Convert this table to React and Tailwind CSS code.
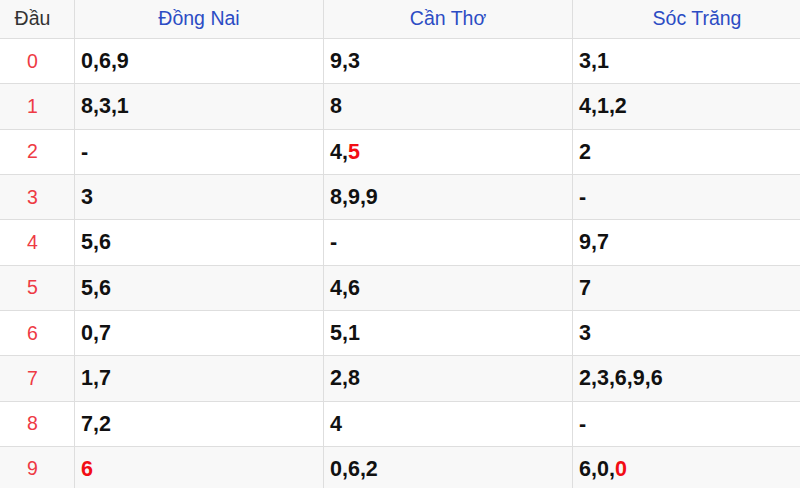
const stations = ["Đồng Nai", "Cần Thơ", "Sóc Trăng"];

// each value: array of [digit, isRed]
const rows = [
  [[["0,6,9"]], [["9,3"]], [["3,1"]]],
  [[["8,3,1"]], [["8"]], [["4,1,2"]]],
  [[["-"]], [["4,"], ["5", true]], [["2"]]],
  [[["3"]], [["8,9,9"]], [["-"]]],
  [[["5,6"]], [["-"]], [["9,7"]]],
  [[["5,6"]], [["4,6"]], [["7"]]],
  [[["0,7"]], [["5,1"]], [["3"]]],
  [[["1,7"]], [["2,8"]], [["2,3,6,9,6"]]],
  [[["7,2"]], [["4"]], [["-"]]],
  [[["6", true]], [["0,6,2"]], [["6,0,"], ["0", true]]],
];

export default function App() {
  return (
    <div className="w-[800px] h-[488px] overflow-hidden bg-white font-['Liberation_Sans',Arial,sans-serif]">
      <div className="grid w-[822px] grid-cols-[75px_249px_249px_249px]">
        <div className="h-[39px] flex items-center justify-center pr-[9px] bg-[#f8f8f8] border-b border-r border-[#dedede] text-[19.5px] text-[#333]">
          Đầu
        </div>
        {stations.map((s) => (
          <div
            key={s}
            className="h-[39px] flex items-center justify-center bg-[#f8f8f8] border-b border-r border-[#dedede] text-[19.5px] text-[#2c4cc4]"
          >
            {s}
          </div>
        ))}

        {rows.map((row, i) => {
          const bg = i % 2 === 1 ? "bg-[#f8f8f8]" : "bg-white";
          return [
            <div
              key={`d${i}`}
              className={`h-[45.33px] flex items-center justify-center pr-[9px] border-b border-r border-[#dedede] text-[19.5px] text-[#ee3a44] ${bg}`}
            >
              {i}
            </div>,
            ...row.map((cell, j) => (
              <div
                key={`c${i}-${j}`}
                className={`h-[45.33px] flex items-center pl-[6px] border-b border-r border-[#dedede] text-[21.5px] font-bold text-[#111] ${bg}`}
              >
                {cell.map(([t, red], k) => (
                  <span key={k} className={red ? "text-[#f20d14]" : ""}>
                    {t}
                  </span>
                ))}
              </div>
            )),
          ];
        })}
      </div>
    </div>
  );
}
